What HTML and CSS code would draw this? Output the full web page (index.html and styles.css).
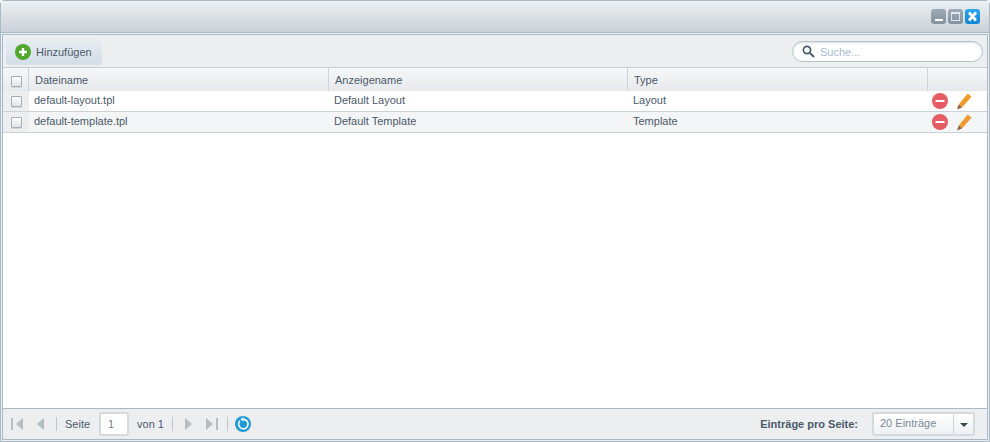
FILE: index.html
```html
<!DOCTYPE html>
<html>
	<head>
		<meta charset="UTF-8">
		<title>Templates</title>
		<link rel="stylesheet" href="styles.css">
	</head>
	<body>
		<div class="window">
			<div class="titlebar">
				<span class="win-btn"><svg width="15" height="15" viewBox="0 0 15 15"><rect x="4" y="10" width="8" height="2" fill="#fff"/></svg></span>
				<span class="win-btn"><svg width="15" height="15" viewBox="0 0 15 15"><rect x="3.500" y="3.500" width="8" height="8" fill="none" stroke="#dfe5ea"/><rect x="3" y="3" width="9" height="2" fill="#dfe5ea"/></svg></span>
				<span class="win-btn close"><svg width="15" height="15" viewBox="0 0 15 15"><path d="M4 3.500l7 8M11 3.500l-7 8" stroke="#fff" stroke-width="2.800"/></svg></span>
			</div>
			<div class="panel">
				<div class="toolbar">
					<button class="add-btn">
						<svg width="16" height="16" viewBox="0 0 16 16"><circle cx="8" cy="8" r="8" fill="#4fa82c"/><path d="M8 4v8M4 8h8" stroke="#fff" stroke-width="2.400"/></svg>
						Hinzufügen
					</button>
					<div class="search">
						<svg width="13" height="13" viewBox="0 0 13 13"><circle cx="5" cy="5" r="3.600" fill="none" stroke="#4a5a6a" stroke-width="1.700"/><path d="M8 8l4 4" stroke="#4a5a6a" stroke-width="2"/></svg>
						<span>Suche...</span>
					</div>
				</div>
				<div class="grid">
					<div class="row head">
						<div class="cell check"><i class="box"></i></div>
						<div class="cell col">Dateiname</div>
						<div class="cell col">Anzeigename</div>
						<div class="cell col">Type</div>
						<div class="cell actions"></div>
					</div>
					<div class="row">
						<div class="cell check"><i class="box"></i></div>
						<div class="cell col">default-layout.tpl</div>
						<div class="cell col">Default Layout</div>
						<div class="cell col">Layout</div>
						<div class="cell actions">
							<svg width="16" height="16" viewBox="0 0 16 16"><circle cx="8" cy="8" r="8" fill="#e35d63"/><rect x="3.500" y="7" width="9" height="2" fill="#fff"/></svg>
							<svg width="16" height="17" viewBox="0 0 16 17"><path d="M11.800.5l3.700 3.300L6 14.500l-3.200-3.300z" fill="#ee9a2c"/><path d="M2.800 11.200L6 14.500l-5 2z" fill="#8a6248"/></svg>
						</div>
					</div>
					<div class="row alt">
						<div class="cell check"><i class="box"></i></div>
						<div class="cell col">default-template.tpl</div>
						<div class="cell col">Default Template</div>
						<div class="cell col">Template</div>
						<div class="cell actions">
							<svg width="16" height="16" viewBox="0 0 16 16"><circle cx="8" cy="8" r="8" fill="#e35d63"/><rect x="3.500" y="7" width="9" height="2" fill="#fff"/></svg>
							<svg width="16" height="17" viewBox="0 0 16 17"><path d="M11.800.5l3.700 3.300L6 14.500l-3.200-3.300z" fill="#ee9a2c"/><path d="M2.800 11.200L6 14.500l-5 2z" fill="#8a6248"/></svg>
						</div>
					</div>
				</div>
				<div class="pager">
					<svg class="first" width="15" height="14" viewBox="0 0 15 14"><rect x="1" y="1" width="2" height="12" fill="#b4bcc4"/><path d="M13 1v12L6 7z" fill="#b4bcc4"/></svg>
					<svg class="prev" width="8" height="14" viewBox="0 0 8 14"><path d="M7 1v12L0 7z" fill="#b4bcc4"/></svg>
					<i class="sep sep-a"></i>
					<span class="seite">Seite</span>
					<span class="page-input">1</span>
					<span class="von">von 1</span>
					<i class="sep sep-b"></i>
					<svg class="next" width="8" height="14" viewBox="0 0 8 14"><path d="M1 1v12l7-6z" fill="#b4bcc4"/></svg>
					<svg class="last" width="15" height="14" viewBox="0 0 15 14"><path d="M2 1v12l7-6z" fill="#b4bcc4"/><rect x="12" y="1" width="2" height="12" fill="#b4bcc4"/></svg>
					<i class="sep sep-b"></i>
					<svg class="refresh" width="16" height="16" viewBox="0 0 16 16"><circle cx="8" cy="8" r="8" fill="#1e9ad6"/><path d="M5 4.800a4.700 4.700 0 1 0 3.500-1.400" fill="none" stroke="#fff" stroke-width="1.600"/><path d="M8.500 1v4.600L5.500 3.300z" fill="#fff"/></svg>
					<b class="per-page">Einträge pro Seite:</b>
					<div class="select">
						<span class="value">20 Einträge</span>
						<span class="arrow"></span>
					</div>
				</div>
			</div>
		</div>
	</body>
</html>
```
FILE: styles.css
```css
html, body { margin: 0; height: 100%; }
body { font-family: "Liberation Sans", Arial, sans-serif; font-size: 11px; color: #4b5a69; background: #fff; overflow: hidden; }

.window { box-sizing: border-box; height: 442px; border: 1px solid #a8bac8; border-radius: 4px 4px 0 0; display: flex; flex-direction: column; background: #eceef0; }
.titlebar { height: 31px; flex: none; display: flex; justify-content: flex-end; align-items: center; gap: 2px; padding-right: 9px; background: linear-gradient(#eef0f2, #c9d0d6); border-bottom: 1px solid #a8bac8; }
.win-btn { width: 15px; height: 15px; border-radius: 3px; background: linear-gradient(#9dabb7, #84939f); display: block; }
.win-btn.close { background: linear-gradient(#2fa6ee, #0d85d8); }
.win-btn svg { display: block; }

.panel { flex: 1; min-height: 0; margin: 1px; border: 1px solid #a8bac8; display: flex; flex-direction: column; background: #fff; }

.toolbar { height: 32px; flex: none; display: flex; align-items: center; justify-content: space-between; background: #eceef0; border-bottom: 1px solid #c6ced5; }
.add-btn { box-sizing: border-box; width: 96px; height: 27px; margin: 1px 0 0 3px; padding: 0 0 0 9px; display: flex; align-items: center; gap: 5px; font: 11px "Liberation Sans", Arial, sans-serif; color: #4b5a69; border: 0; border-radius: 4px; background: linear-gradient(#e8edf2, #d3dde7); }
.search { width: 191px; height: 21px; box-sizing: border-box; margin: 1px 4px 0 0; padding-left: 9px; display: flex; align-items: center; gap: 5px; color: #a7bbcf; background: #fff; border: 1px solid #b4c2ce; border-radius: 11px; box-shadow: inset 0 1px 2px #d6dde3; }

.grid { flex: 1; min-height: 0; }
.row { display: grid; grid-template-columns: 26px 300px 299px 300px 1fr; height: 20px; align-items: center; background: #fff; border-bottom: 1px solid #c8d2da; }
.row.alt { background: #f3f5f7; }
.row.head { height: 23px; background: linear-gradient(#f6f7f8, #e6e9ec); border-bottom: 0; }
.cell { box-sizing: border-box; height: 100%; display: flex; align-items: center; padding-left: 5px; }
.col { padding-bottom: 2px; }
.head .cell { padding: 0 0 0 6px; border-right: 1px solid #ccd3d9; }
.head .cell:last-child { border-right: 0; }
.cell.check, .head .cell.check { padding: 0 0 0 8px; background: #eceef0; }
.head .cell.check { background: none; }
.head .box { margin-top: 3px; }
.box { display: block; width: 9px; height: 9px; border: 1px solid #a4adb6; border-radius: 1px; background: linear-gradient(#fff, #dfe3e7); box-shadow: 0 1px 0 #d3d7db; }
.cell.actions { padding-left: 4px; gap: 8px; }

.pager { height: 31px; flex: none; margin-top: auto; box-sizing: border-box; display: flex; align-items: center; padding: 0 12px 0 7px; background: #eceef0; border-top: 1px solid #a8bac8; }
.prev { margin-left: 12px; }
.sep { width: 1px; height: 14px; background: #bcc4cb; display: block; }
.sep-a { margin-left: 11px; }
.sep-b { margin-left: 8px; }
.seite { margin-left: 8px; }
.von { margin-left: 8px; }
.next { margin-left: 11px; }
.last { margin-left: 12px; }
.refresh { margin-left: 7px; }
.page-input { box-sizing: border-box; width: 30px; height: 24px; margin-left: 9px; padding-left: 7px; line-height: 20px; color: #6a7a8a; background: #fff; border: 2px solid #d5dadf; border-radius: 3px; }
.per-page { margin-left: auto; margin-right: 14px; }
.select { box-sizing: border-box; width: 103px; height: 24px; display: flex; background: linear-gradient(#fff, #eef0f2); border: 2px solid #d5dadf; border-radius: 3px; color: #7b8a99; }
.select .value { flex: 1; padding-left: 6px; line-height: 19px; }
.select .arrow { width: 19px; position: relative; border-left: 1px solid #cfd5da; }
.select .arrow::after { content: ""; position: absolute; left: 6px; top: 9px; border: 4px solid transparent; border-top-color: #3c4650; border-bottom: 0; }
```
